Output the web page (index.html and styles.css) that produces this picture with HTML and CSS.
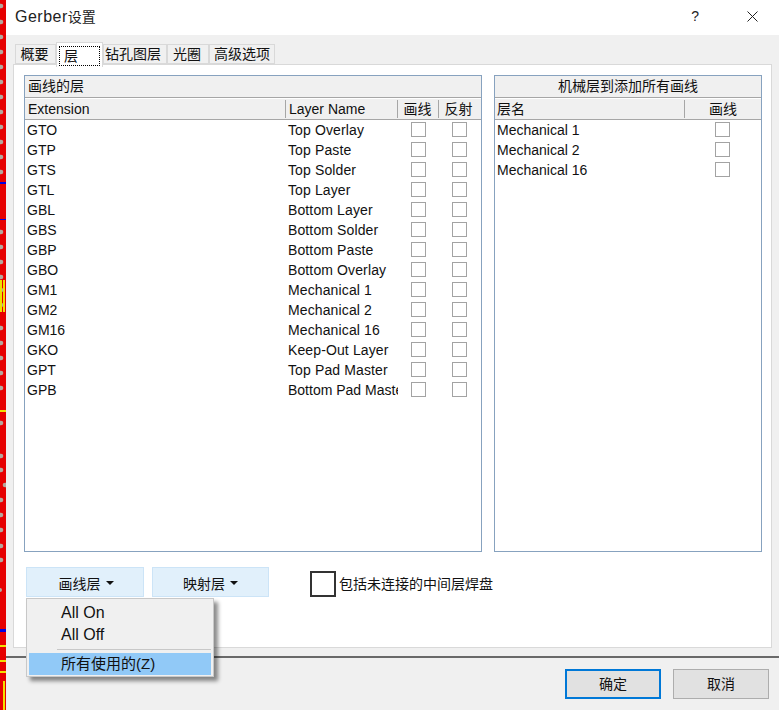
FILE: index.html
```html
<!DOCTYPE html>
<html lang="zh">
<head>
<meta charset="utf-8">
<title>Gerber设置</title>
<link rel="stylesheet" href="styles.css">
</head>
<body>
<div class="desktop">
  <svg class="strip" width="6" height="710" viewBox="0 0 6 710">
    <rect width="6" height="710" fill="#e60000"/>
    <g fill="#b5a79c">
      <circle cx="1" cy="6" r="2.3"/><circle cx="1" cy="22" r="2.3"/><circle cx="1" cy="37" r="2.3"/>
      <circle cx="1" cy="52" r="2.3"/><circle cx="1" cy="67" r="2.3"/><circle cx="1" cy="82" r="2.3"/>
      <circle cx="1" cy="97" r="2.3"/><circle cx="1" cy="112" r="2.3"/><circle cx="1" cy="127" r="2.3"/>
      <circle cx="1" cy="142" r="2.3"/><circle cx="1" cy="157" r="2.3"/><circle cx="1" cy="172" r="2.3"/>
      <circle cx="1" cy="232" r="2.3"/><circle cx="1" cy="247" r="2.3"/><circle cx="1" cy="262" r="2.3"/>
      <circle cx="1" cy="277" r="2.3"/><circle cx="1" cy="290" r="2.3"/><circle cx="1" cy="305" r="2.3"/>
      <circle cx="1" cy="328" r="2.3"/><circle cx="1" cy="343" r="2.3"/><circle cx="1" cy="358" r="2.3"/>
      <circle cx="1" cy="373" r="2.3"/><circle cx="1" cy="388" r="2.3"/><circle cx="1" cy="423" r="2.3"/>
      <circle cx="1" cy="456" r="2.3"/><circle cx="1" cy="470" r="2.3"/><circle cx="5" cy="485" r="2.3"/>
      <circle cx="1" cy="500" r="2.3"/><circle cx="1" cy="515" r="2.3"/><circle cx="1" cy="530" r="2.3"/>
      <circle cx="1" cy="546" r="2.3"/><circle cx="1" cy="560" r="2.3"/><circle cx="0" cy="590" r="2"/>
    </g>
    <rect y="182" width="6" height="2" fill="#0000e0"/>
    <rect y="219" width="6" height="1" fill="#0000e0"/>
    <rect x="0" y="280" width="2" height="32" fill="#f0e000"/>
    <rect x="3" y="280" width="2" height="32" fill="#f0e000"/>
    <rect y="410" width="6" height="2" fill="#f0e000"/>
    <rect y="629" width="6" height="3" fill="#0000e0"/>
    <rect y="645" width="6" height="2" fill="#f0e000"/>
    <rect y="660" width="6" height="2" fill="#f0e000"/>
    <rect y="671" width="6" height="2" fill="#f0e000"/>
    <rect x="3" y="681" width="2" height="29" fill="#f0e000"/>
  </svg>
  <div class="window">
    <header class="titlebar">
      <span class="title"><span class="title-latin">Gerber</span>设置</span>
      <span class="help">?</span>
      <svg class="close" width="11" height="11" viewBox="0 0 11 11"><path d="M.5.5l10 10M10.500.5l-10 10" stroke="#222" fill="none"/></svg>
    </header>
    <main class="body">
      <nav class="tabs">
        <span class="tab t1">概要</span>
        <span class="tab active"><span class="focus">层</span></span>
        <span class="tab t3">钻孔图层</span>
        <span class="tab t4">光圈</span>
        <span class="tab t5">高级选项</span>
      </nav>
      <section class="pane">
        <div class="panels">
          <div class="panel left">
            <div class="caption">画线的层</div>
            <div class="head">
              <span class="c-ext">Extension</span>
              <span class="c-name">Layer Name</span>
              <span class="c-chk">画线</span>
              <span class="c-chk last">反射</span>
            </div>
            <div class="row"><span class="c-ext">GTO</span><span class="c-name">Top Overlay</span><span class="c-chk"><i class="box"></i></span><span class="c-chk last"><i class="box"></i></span></div>
            <div class="row"><span class="c-ext">GTP</span><span class="c-name">Top Paste</span><span class="c-chk"><i class="box"></i></span><span class="c-chk last"><i class="box"></i></span></div>
            <div class="row"><span class="c-ext">GTS</span><span class="c-name">Top Solder</span><span class="c-chk"><i class="box"></i></span><span class="c-chk last"><i class="box"></i></span></div>
            <div class="row"><span class="c-ext">GTL</span><span class="c-name">Top Layer</span><span class="c-chk"><i class="box"></i></span><span class="c-chk last"><i class="box"></i></span></div>
            <div class="row"><span class="c-ext">GBL</span><span class="c-name">Bottom Layer</span><span class="c-chk"><i class="box"></i></span><span class="c-chk last"><i class="box"></i></span></div>
            <div class="row"><span class="c-ext">GBS</span><span class="c-name">Bottom Solder</span><span class="c-chk"><i class="box"></i></span><span class="c-chk last"><i class="box"></i></span></div>
            <div class="row"><span class="c-ext">GBP</span><span class="c-name">Bottom Paste</span><span class="c-chk"><i class="box"></i></span><span class="c-chk last"><i class="box"></i></span></div>
            <div class="row"><span class="c-ext">GBO</span><span class="c-name">Bottom Overlay</span><span class="c-chk"><i class="box"></i></span><span class="c-chk last"><i class="box"></i></span></div>
            <div class="row"><span class="c-ext">GM1</span><span class="c-name">Mechanical 1</span><span class="c-chk"><i class="box"></i></span><span class="c-chk last"><i class="box"></i></span></div>
            <div class="row"><span class="c-ext">GM2</span><span class="c-name">Mechanical 2</span><span class="c-chk"><i class="box"></i></span><span class="c-chk last"><i class="box"></i></span></div>
            <div class="row"><span class="c-ext">GM16</span><span class="c-name">Mechanical 16</span><span class="c-chk"><i class="box"></i></span><span class="c-chk last"><i class="box"></i></span></div>
            <div class="row"><span class="c-ext">GKO</span><span class="c-name">Keep-Out Layer</span><span class="c-chk"><i class="box"></i></span><span class="c-chk last"><i class="box"></i></span></div>
            <div class="row"><span class="c-ext">GPT</span><span class="c-name">Top Pad Master</span><span class="c-chk"><i class="box"></i></span><span class="c-chk last"><i class="box"></i></span></div>
            <div class="row"><span class="c-ext">GPB</span><span class="c-name tight">Bottom Pad Master</span><span class="c-chk"><i class="box"></i></span><span class="c-chk last"><i class="box"></i></span></div>
          </div>
          <div class="panel right">
            <div class="caption center">机械层到添加所有画线</div>
            <div class="head">
              <span class="c-layer">层名</span>
              <span class="c-draw">画线</span>
            </div>
            <div class="row"><span class="c-layer">Mechanical 1</span><span class="c-draw"><i class="box"></i></span></div>
            <div class="row"><span class="c-layer">Mechanical 2</span><span class="c-draw"><i class="box"></i></span></div>
            <div class="row"><span class="c-layer">Mechanical 16</span><span class="c-draw"><i class="box"></i></span></div>
          </div>
        </div>
        <div class="actions">
          <button class="drop first">画线层<i class="caret"></i></button>
          <button class="drop second">映射层<i class="caret"></i></button>
          <label class="option"><i class="bigbox"></i><span class="option-text">包括未连接的中间层焊盘</span></label>
        </div>
        <div class="menu">
          <div class="menu-item">All On</div>
          <div class="menu-item">All Off</div>
          <div class="menu-sep"></div>
          <div class="menu-item selected">所有使用的(Z)</div>
        </div>
      </section>
      <footer class="footer">
        <button class="btn primary">确定</button>
        <button class="btn">取消</button>
      </footer>
    </main>
  </div>
</div>
</body>
</html>
```
FILE: styles.css
```css
* { box-sizing: border-box; }
html, body { margin: 0; padding: 0; }
body {
  width: 779px;
  height: 710px;
  overflow: hidden;
  font-family: "Liberation Sans", "Noto Sans CJK SC", sans-serif;
  font-size: 14px;
  color: #111;
  background: #f0f0f0;
}
.desktop { display: flex; height: 710px; }
.strip { display: block; flex: none; width: 6px; height: 710px; }
.window { flex: 1; display: flex; flex-direction: column; min-width: 0; }

.titlebar {
  height: 35px;
  flex: none;
  background: #fff;
  display: flex;
  align-items: center;
  padding: 0 21px 3px 9px;
}
.title { font-size: 14px; color: #222; flex: 1; }
.title-latin { font-size: 16px; letter-spacing: 0.5px; }
.help { font-size: 14px; color: #222; margin-right: 48px; }
.close { display: block; }

.body { flex: 1; display: flex; flex-direction: column; background: #f0f0f0; padding-top: 9px; }
.tabs { height: 20px; display: flex; margin-left: 9px; position: relative; z-index: 2; }
.tab {
  height: 20px;
  border: 1px solid #d9d9d9;
  background: #f0f0f0;
  display: flex;
  align-items: center;
  justify-content: center;
  line-height: 1;
}
.t1 { width: 41px; padding-right: 2px; }
.active {
  width: 47px;
  height: 25px;
  margin-top: -2px;
  background: #fff;
  padding: 2px 2px 1px;
  border-bottom: 0;
  position: relative;
}
.focus {
  width: 100%;
  height: 20px;
  border: 1px dotted #000;
  display: flex;
  align-items: center;
  padding-left: 4px;
}
.t3 { width: 64px; padding-right: 4px; }
.t4 { width: 42px; padding-right: 2px; }
.t5 { width: 66px; }

.pane {
  margin-left: 7px;
  width: 759px;
  height: 584px;
  background: #fff;
  border: 1px solid #d9d9d9;
  padding: 10px 0 0 10px;
  position: relative;
}
.panels { display: flex; gap: 12px; }
.panel {
  height: 477px;
  border: 1px solid #87a2bf;
  background: #fff;
  overflow: hidden;
}
.panel.left { width: 458px; }
.panel.right { width: 268px; }
.caption {
  height: 22px;
  background: #f0f0f0;
  border-bottom: 1px solid #a6a6a6;
  padding-left: 3px;
  line-height: 21px;
  white-space: nowrap;
}
.caption.center { text-align: center; padding: 0; }
.head {
  height: 22px;
  background: #f0f0f0;
  border-top: 1px solid #fff;
  border-bottom: 1px solid #a6a6a6;
  display: flex;
  align-items: stretch;
  line-height: 20px;
}
.head > span { position: relative; padding-left: 3px; }
.head > span::after {
  content: "";
  position: absolute;
  right: 0;
  top: 1px;
  bottom: 1px;
  width: 1px;
  background: #a6a6a6;
}
.head > span.last::after, .head > .c-draw::after { display: none; }
.row { height: 20px; display: flex; align-items: center; white-space: nowrap; }
.row > span { display: flex; align-items: center; height: 20px; overflow: hidden; }
.row > .c-ext, .row > .c-name, .row > .c-layer { padding-left: 2px; }
.row > .c-name { letter-spacing: 0.12px; }
.row > .c-name.tight { letter-spacing: 0; }
.row > .c-draw { padding-right: 2px; }
.c-ext { width: 261px; flex: none; }
.c-name { width: 112px; flex: none; overflow: hidden; white-space: nowrap; }
.head .c-name { padding-left: 3px; }
.c-chk { width: 41px; flex: none; text-align: center; justify-content: center; }
.head .c-chk { padding: 0 2px 0 0; }
.c-layer { width: 190px; flex: none; }
.head .c-layer { padding-left: 2px; }
.c-draw { width: 76px; flex: none; text-align: center; justify-content: center; }
.head .c-draw { padding: 0; }
.box {
  display: block;
  width: 15px;
  height: 15px;
  border: 1px solid #a3a3a3;
  background: #fff;
  margin-top: -1px;
}

.actions { display: flex; align-items: flex-start; margin: 15px 0 0 2px; }
.drop {
  height: 30px;
  background: #e1f0fb;
  border: 1px solid #cce4f7;
  font: inherit;
  color: #111;
  padding: 1px 0 0;
  display: flex;
  align-items: center;
  justify-content: center;
}
.first { width: 118px; margin-right: 8px; padding-left: 2px; }
.second { width: 117px; }
.caret {
  display: block;
  width: 0;
  height: 0;
  margin-left: 5px;
  border-left: 4px solid transparent;
  border-right: 4px solid transparent;
  border-top: 4px solid #111;
}
.option { display: flex; align-items: center; margin: 4px 0 0 41px; }
.bigbox { display: block; width: 26px; height: 26px; border: 2px solid #333; margin-right: 3px; }
.option-text { margin-top: -2px; }

.menu {
  position: absolute;
  left: 12px;
  top: 533px;
  width: 188px;
  height: 79px;
  background: #f0f0f0;
  border: 1px solid #c8c8c8;
  box-shadow: 4px 4px 4px rgba(0, 0, 0, 0.45);
  padding: 3px 2px 2px;
  z-index: 5;
  line-height: 22px;
}
.menu-item { height: 22px; padding-left: 32px; font-size: 16px; }
.menu-sep { height: 1px; margin: 3px 0 3px 28px; background: #c8c8c8; }
.menu-item.selected { background: #91c9f7; font-size: 15px; }

.footer {
  margin-top: 8px;
  border-top: 2px solid #696969;
  display: flex;
  justify-content: flex-end;
  gap: 12px;
  padding: 11px 10px 0 0;
}
.btn {
  width: 96px;
  height: 30px;
  background: #e1e1e1;
  border: 1px solid #adadad;
  font: inherit;
  color: #111;
  padding: 0 0 2px;
}
.btn.primary { border: 2px solid #0078d7; }
```
